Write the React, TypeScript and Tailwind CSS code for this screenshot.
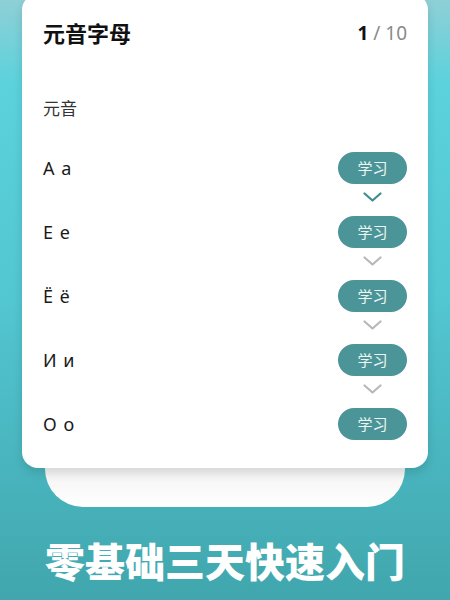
const letters = ["A a", "E e", "Ё ё", "И и", "О о"];

function Chevron({ active }: { active: boolean }) {
  return (
    <svg width="19" height="10" viewBox="0 0 19 10" className="mt-[8px]">
      <polyline
        points="1.5,1.5 9.5,8.5 17.5,1.5"
        fill="none"
        stroke={active ? "#3f8b8f" : "#b8b8b8"}
        strokeWidth="2.2"
        strokeLinecap="round"
        strokeLinejoin="round"
      />
    </svg>
  );
}

export default function App() {
  return (
    <div
      className="relative h-[600px] w-[450px] overflow-hidden bg-[linear-gradient(to_bottom,#8fcfd6_0%,#5bd2dc_14%,#52c6d1_50%,#48b3bc_80%,#41a6ad_100%)]"
      style={{ fontFamily: '"Noto Sans", "Noto Sans CJK SC", sans-serif' }}
    >
      {/* main card */}
      <div className="relative z-10 mx-[22px] mt-[-6px] rounded-[16px] bg-white px-[21px] pb-[28px] shadow-[0_5px_10px_rgba(0,0,0,0.12)]">
        <div className="flex h-[82px] items-center justify-between pb-[4px]">
          <h1 className="text-[22px] font-bold text-[#111]">元音字母</h1>
          <div className="text-[19px] text-[#8a8a8a]">
            <span className="font-bold text-[#111]">1</span> / 10
          </div>
        </div>

        <div className="mt-[22px] flex h-[22px] items-center text-[17px] text-[#333]">元音</div>

        <div className="mt-[32px] flex flex-col">
          {letters.map((l, i) => (
            <div key={l}>
              <div className="flex h-[32px] items-center justify-between">
                <span className="text-[18px] tracking-[1px] text-[#1a1a1a]">{l}</span>
                <button className="flex h-[32px] w-[69px] items-center justify-center rounded-full bg-[#4b9598] text-[15px] text-[#eef6f6]">
                  学习
                </button>
              </div>
              {i < letters.length - 1 && (
                <div className="flex h-[32px] justify-end pr-[25px]">
                  <Chevron active={i === 0} />
                </div>
              )}
            </div>
          ))}
        </div>
      </div>

      {/* back card */}
      <div className="relative mx-[45px] mt-[-40px] h-[79px] rounded-b-[38px] bg-[linear-gradient(to_bottom,#e2e2e2_0%,#f4f4f4_55%,#ffffff_100%)]" />

      <div
        className="mt-[33px] text-center text-[40px] leading-none font-black text-white"
        style={{ fontFamily: '"Noto Sans CJK SC", sans-serif' }}
      >
        零基础三天快速入门
      </div>
    </div>
  );
}
